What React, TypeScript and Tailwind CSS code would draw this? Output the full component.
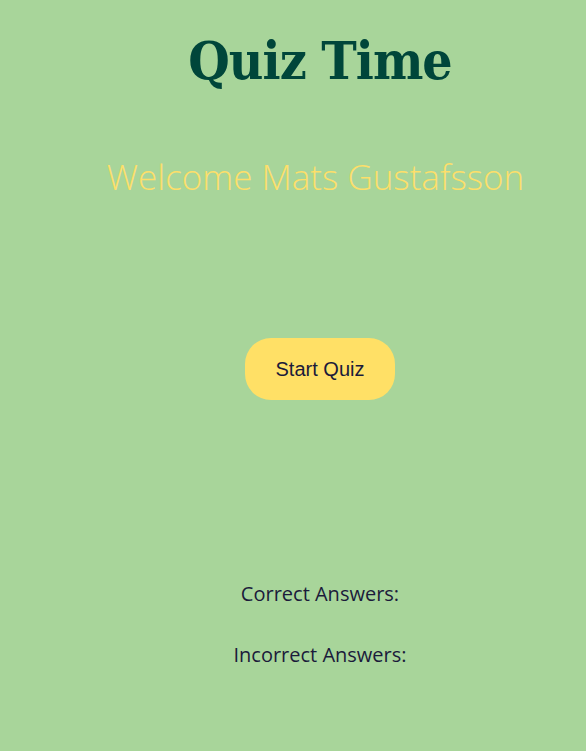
import React from 'react';

export default function App() {
  return (
    <div className="min-h-[751px] w-full overflow-hidden bg-[#a8d59a]">
      <div className="w-[640px] flex flex-col items-center text-center">
        <h1 className="mt-[28px] text-[53px] leading-[64px] font-bold text-[#00463a] tracking-[-1px] [font-family:'DejaVu_Serif_Condensed','DejaVu_Serif',serif]">
          Quiz Time
        </h1>
        <h2 className="mt-[65px] mr-[9px] text-[35px] leading-[40px] font-light text-[#fddf6a] [font-family:'Open_Sans',sans-serif]">
          Welcome Mats Gustafsson
        </h2>
        <button className="mt-[141px] h-[62px] w-[150px] rounded-[26px] bg-[#ffe066] text-[20px] text-[#1b1b3a] [font-family:'Liberation_Sans',Arial,sans-serif]">
          Start Quiz
        </button>
        <div className="mt-[181px] flex flex-col gap-[36px] text-[20px] leading-[25px] text-[#1b1b3a] [font-family:'Open_Sans',sans-serif]">
          <p>Correct Answers:</p>
          <p>Incorrect Answers:</p>
        </div>
      </div>
    </div>
  );
}
